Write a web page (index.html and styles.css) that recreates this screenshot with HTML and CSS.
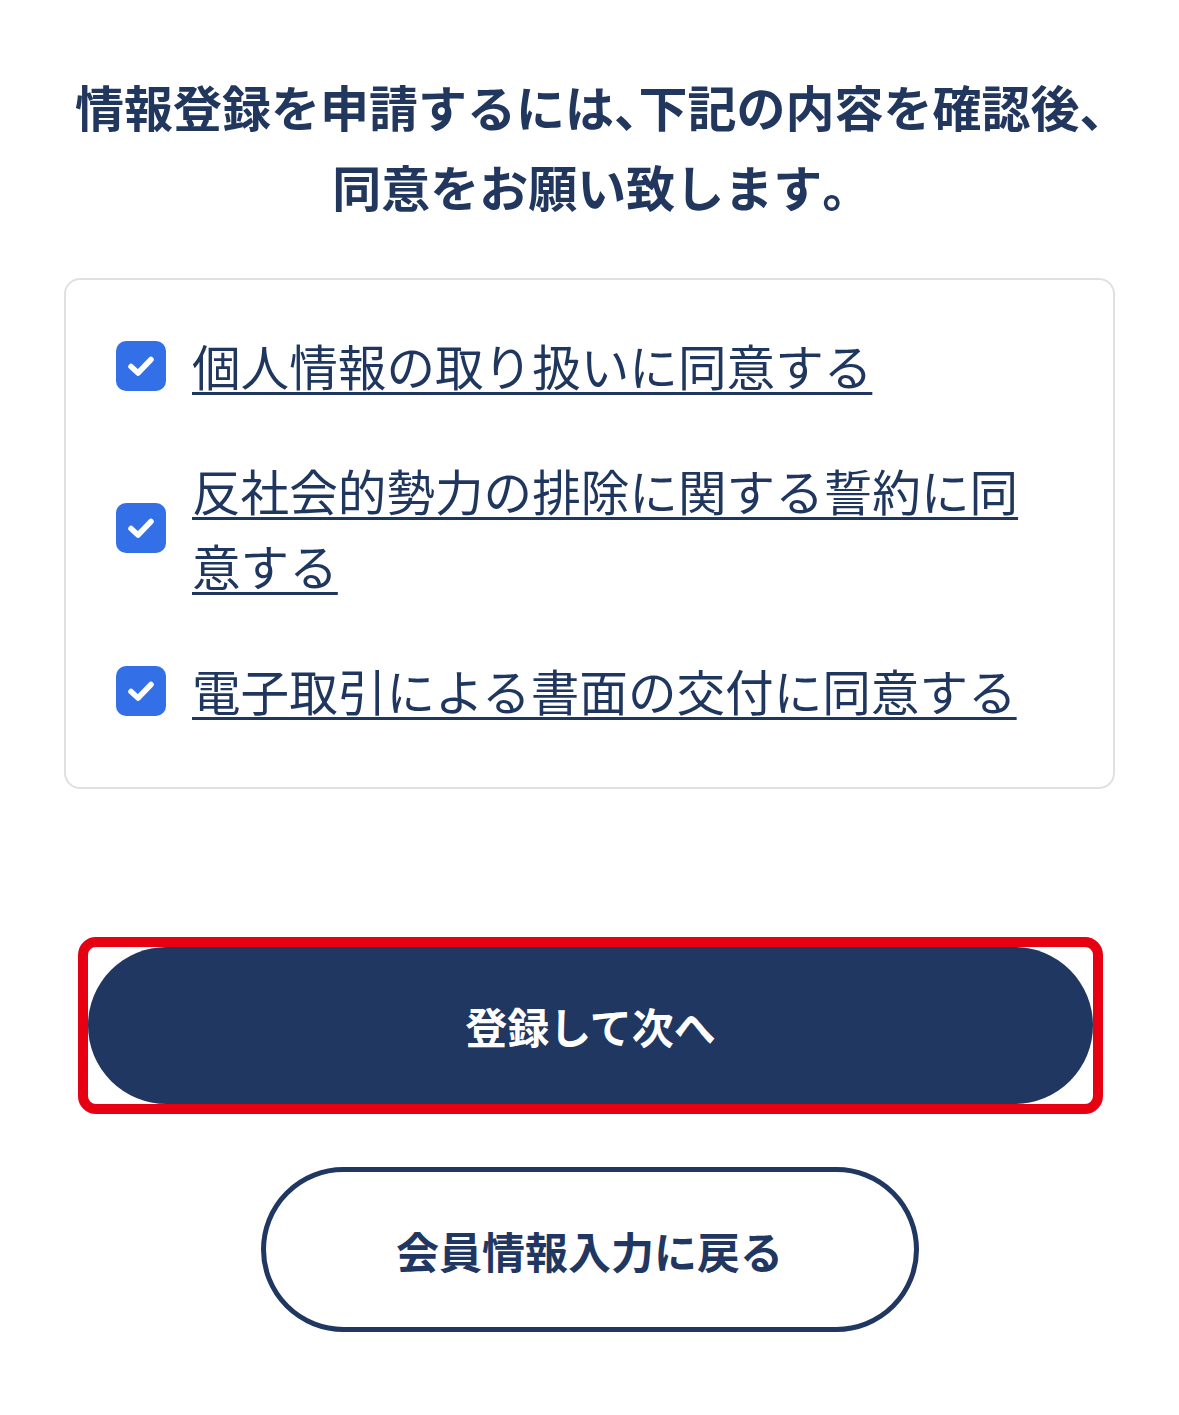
FILE: index.html
```html
<!DOCTYPE html>
<html lang="ja">
<head>
<meta charset="utf-8">
<link rel="stylesheet" href="styles.css">
</head>
<body>
<main class="page">
  <h1 class="title">情報登録を申請するには<span class="punct">、</span>下記の内容を確認後<span class="punct">、</span><br>同意をお願い致します<span class="punct">。</span></h1>
  <section class="card">
    <label class="row">
      <span class="check"><svg viewBox="0 0 50 50" width="50" height="50"><rect width="50" height="50" rx="10" fill="#3370e8"/><path d="M15 25.5 L22 32 L35 18.5" fill="none" stroke="#fff" stroke-width="5.5" stroke-linecap="round" stroke-linejoin="round"/></svg></span>
      <a class="label" href="#">個人情報の取り扱いに同意する</a>
    </label>
    <label class="row">
      <span class="check"><svg viewBox="0 0 50 50" width="50" height="50"><rect width="50" height="50" rx="10" fill="#3370e8"/><path d="M15 25.5 L22 32 L35 18.5" fill="none" stroke="#fff" stroke-width="5.5" stroke-linecap="round" stroke-linejoin="round"/></svg></span>
      <a class="label" href="#">反社会的勢力の排除に関する誓約に同意する</a>
    </label>
    <label class="row">
      <span class="check"><svg viewBox="0 0 50 50" width="50" height="50"><rect width="50" height="50" rx="10" fill="#3370e8"/><path d="M15 25.5 L22 32 L35 18.5" fill="none" stroke="#fff" stroke-width="5.5" stroke-linecap="round" stroke-linejoin="round"/></svg></span>
      <a class="label" href="#">電子取引による書面の交付に同意する</a>
    </label>
  </section>
  <div class="highlight">
    <button class="btn-primary" type="button">登録して次へ</button>
  </div>
  <button class="btn-secondary" type="button">会員情報入力に戻る</button>
</main>
</body>
</html>
```

FILE: styles.css
```css
html, body {
  margin: 0;
  padding: 0;
  background: #ffffff;
}
body {
  font-family: "Noto Sans CJK JP", "Noto Sans", sans-serif;
  color: #1f365f;
}
.page {
  display: flex;
  flex-direction: column;
  align-items: stretch;
  padding: 66px 64px 80px;
}
.title {
  margin: 0;
  text-align: center;
  font-size: 49px;
  line-height: 80px;
  font-weight: 700;
  color: #22375e;
  white-space: nowrap;
  margin-left: -20px;
  margin-right: -20px;
}
.punct {
  font-feature-settings: "halt";
}
.card {
  margin-top: 52px;
  border: 2px solid #e0e0e3;
  border-radius: 16px;
  padding: 48px 60px 59px 50px;
  display: flex;
  flex-direction: column;
  gap: 50px;
}
.row {
  display: flex;
  align-items: center;
  gap: 26px;
}
.check {
  flex: 0 0 50px;
  width: 50px;
  height: 50px;
  display: block;
}
.check svg {
  display: block;
}
.label {
  font-size: 48.6px;
  line-height: 75px;
  color: #1f365f;
  text-decoration: underline;
  text-decoration-thickness: 3px;
  text-underline-offset: 6px;
}
.highlight {
  margin: 148px 12px 0 14px;
  border: 10px solid #e60012;
  border-radius: 18px;
  display: flex;
}
.btn-primary {
  flex: 1;
  height: 157px;
  border: none;
  border-radius: 80px;
  background: #1f3761;
  color: #ffffff;
  font-family: "Noto Sans CJK JP", "Noto Sans", sans-serif;
  font-size: 42px;
  font-weight: 700;
  margin: 0;
  padding: 0;
}
.btn-secondary {
  align-self: center;
  margin-top: 53px;
  width: 658px;
  height: 165px;
  border: 5px solid #1f3761;
  border-radius: 83px;
  background: #ffffff;
  color: #1f3761;
  font-family: "Noto Sans CJK JP", "Noto Sans", sans-serif;
  font-size: 43px;
  font-weight: 700;
  padding: 0;
}
```
